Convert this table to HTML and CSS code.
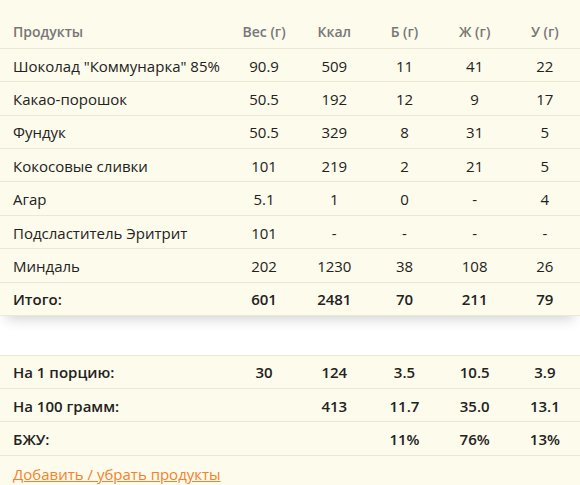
FILE: index.html
```html
<!DOCTYPE html>
<html lang="ru">
<head>
<meta charset="utf-8">
<link rel="stylesheet" href="styles.css">
</head>
<body>
<div class="card main">
<table class="tbl">
<colgroup><col class="c-name"><col><col><col><col><col></colgroup>
<thead>
<tr><th class="name">Продукты</th><th>Вес (г)</th><th>Ккал</th><th>Б (г)</th><th>Ж (г)</th><th>У (г)</th></tr>
</thead>
<tbody>
<tr><td class="name">Шоколад "Коммунарка" 85%</td><td>90.9</td><td>509</td><td>11</td><td>41</td><td>22</td></tr>
<tr><td class="name">Какао-порошок</td><td>50.5</td><td>192</td><td>12</td><td>9</td><td>17</td></tr>
<tr><td class="name">Фундук</td><td>50.5</td><td>329</td><td>8</td><td>31</td><td>5</td></tr>
<tr><td class="name">Кокосовые сливки</td><td>101</td><td>219</td><td>2</td><td>21</td><td>5</td></tr>
<tr><td class="name">Агар</td><td>5.1</td><td>1</td><td>0</td><td>-</td><td>4</td></tr>
<tr><td class="name">Подсластитель Эритрит</td><td>101</td><td>-</td><td>-</td><td>-</td><td>-</td></tr>
<tr><td class="name">Миндаль</td><td>202</td><td>1230</td><td>38</td><td>108</td><td>26</td></tr>
<tr class="total"><td class="name">Итого:</td><td>601</td><td>2481</td><td>70</td><td>211</td><td>79</td></tr>
</tbody>
</table>
</div>
<div class="card summary">
<table class="tbl bold">
<colgroup><col class="c-name"><col><col><col><col><col></colgroup>
<tbody>
<tr><td class="name">На 1 порцию:</td><td>30</td><td>124</td><td>3.5</td><td>10.5</td><td>3.9</td></tr>
<tr><td class="name">На 100 грамм:</td><td></td><td>413</td><td>11.7</td><td>35.0</td><td>13.1</td></tr>
<tr><td class="name">БЖУ:</td><td></td><td></td><td>11%</td><td>76%</td><td>13%</td></tr>
</tbody>
</table>
<div class="actions"><a class="link" href="#">Добавить / убрать продукты</a></div>
</div>
</body>
</html>
```
FILE: styles.css
```css
html, body {
  margin: 0;
  padding: 0;
  background: #ffffff;
}
body {
  font-family: "Open Sans", "Liberation Sans", sans-serif;
  font-size: 15px;
  color: #222222;
}
.card {
  background: #fdfbeb;
}
.main {
  padding-top: 15.6px;
  box-shadow: 0 9px 12px -6px rgba(0, 0, 0, 0.18);
  position: relative;
  z-index: 1;
}
.summary {
  margin-top: 38.6px;
  border-top: 1px solid #ebe8d3;
  padding-bottom: 20px;
}
.tbl {
  width: 580px;
  border-collapse: collapse;
  table-layout: fixed;
}
.c-name {
  width: 229px;
}
.tbl th,
.tbl td {
  text-align: center;
  line-height: 20px;
  padding: 6.7px 0 5.7px 0;
  border-bottom: 1px solid #ebe8d3;
  white-space: nowrap;
}
.tbl th {
  font-size: 14px;
  font-weight: 600;
  color: #777777;
}
.tbl .name {
  text-align: left;
  padding-left: 13px;
}
.total td,
.bold td {
  font-size: 15px;
  font-weight: 600;
}
.actions {
  padding: 8px 13px 0 13px;
  line-height: 20px;
}
.link {
  color: #f5812c;
  text-decoration: underline;
  font-size: 15px;
}
```
